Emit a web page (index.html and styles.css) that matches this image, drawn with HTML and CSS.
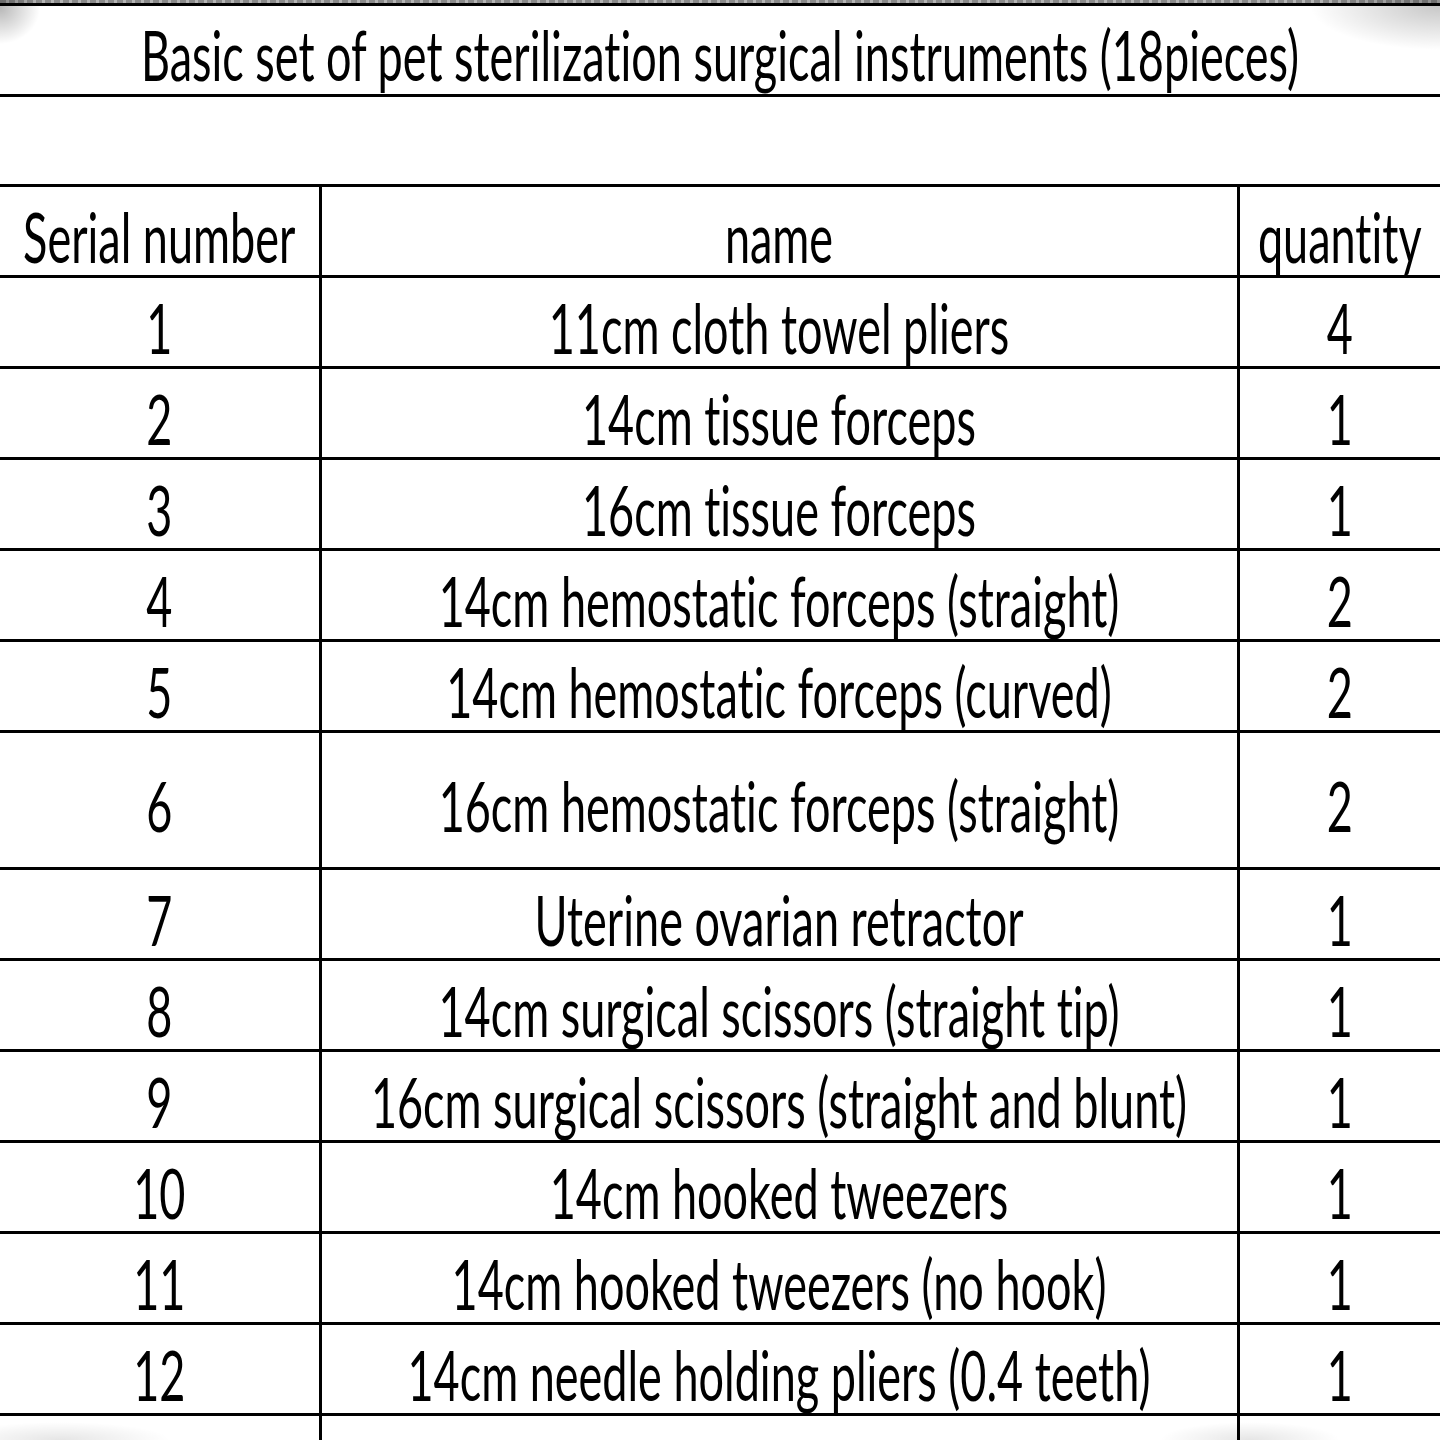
FILE: index.html
```html
<!DOCTYPE html>
<html lang="en">
<head>
<meta charset="utf-8">
<title>Basic set of pet sterilization surgical instruments</title>
<link rel="stylesheet" href="styles.css">
</head>
<body>
<div class="sheet">
  <div class="cap-band"></div>
  <table class="grid">
    <colgroup>
      <col class="c-serial">
      <col class="c-name">
      <col class="c-qty">
    </colgroup>
    <tbody>
      <tr class="r-title"><td colspan="3" class="title"><span class="t">Basic set of pet sterilization surgical instruments (18pieces)</span></td></tr>
      <tr class="r-blank"><td colspan="3" class="blank"></td></tr>
      <tr class="r"><td><span class="t">Serial number</span></td><td><span class="t">name</span></td><td><span class="t">quantity</span></td></tr>
      <tr class="r"><td><span class="t">1</span></td><td><span class="t">11cm cloth towel pliers</span></td><td><span class="t">4</span></td></tr>
      <tr class="r"><td><span class="t">2</span></td><td><span class="t">14cm tissue forceps</span></td><td><span class="t">1</span></td></tr>
      <tr class="r"><td><span class="t">3</span></td><td><span class="t">16cm tissue forceps</span></td><td><span class="t">1</span></td></tr>
      <tr class="r"><td><span class="t">4</span></td><td><span class="t">14cm hemostatic forceps (straight)</span></td><td><span class="t">2</span></td></tr>
      <tr class="r"><td><span class="t">5</span></td><td><span class="t">14cm hemostatic forceps (curved)</span></td><td><span class="t">2</span></td></tr>
      <tr class="r r-tall"><td><span class="t">6</span></td><td><span class="t">16cm hemostatic forceps (straight)</span></td><td><span class="t">2</span></td></tr>
      <tr class="r"><td><span class="t">7</span></td><td><span class="t">Uterine ovarian retractor</span></td><td><span class="t">1</span></td></tr>
      <tr class="r"><td><span class="t">8</span></td><td><span class="t">14cm surgical scissors (straight tip)</span></td><td><span class="t">1</span></td></tr>
      <tr class="r"><td><span class="t">9</span></td><td><span class="t">16cm surgical scissors (straight and blunt)</span></td><td><span class="t">1</span></td></tr>
      <tr class="r"><td><span class="t">10</span></td><td><span class="t">14cm hooked tweezers</span></td><td><span class="t">1</span></td></tr>
      <tr class="r"><td><span class="t">11</span></td><td><span class="t">14cm hooked tweezers (no hook)</span></td><td><span class="t">1</span></td></tr>
      <tr class="r"><td><span class="t">12</span></td><td><span class="t">14cm needle holding pliers (0.4 teeth)</span></td><td><span class="t">1</span></td></tr>
      <tr class="r r-tail"><td></td><td></td><td></td></tr>
    </tbody>
  </table>
</div>
</body>
</html>
```

FILE: styles.css
```css
html, body {
  margin: 0;
  padding: 0;
  background: #ffffff;
}

.sheet {
  position: relative;
  width: 1440px;
  height: 1440px;
  overflow: hidden;
  background: #ffffff;
  font-family: Lato, "Noto Sans", sans-serif;
  color: #000;
}

/* scan shadows lying over the sheet corners */
.sheet::after {
  content: "";
  position: absolute;
  inset: 0;
  pointer-events: none;
  background:
    radial-gradient(ellipse 40px 36px at 0px 8px, rgba(0,0,0,0.28), rgba(0,0,0,0) 100%),
    radial-gradient(ellipse 130px 44px at 1440px 6px, rgba(0,0,0,0.22), rgba(0,0,0,0) 100%),
    radial-gradient(ellipse 110px 18px at 60px 1440px, rgba(0,0,0,0.10), rgba(0,0,0,0) 100%),
    radial-gradient(ellipse 90px 18px at 1250px 1440px, rgba(0,0,0,0.10), rgba(0,0,0,0) 100%);
}

.cap-band {
  height: 3px;
  background: repeating-linear-gradient(90deg, #8a8a8a 0 6px, #b5b5b5 6px 9px);
}

.grid {
  width: 1440px;
  table-layout: fixed;
  border-collapse: collapse;
}

.c-serial { width: 320px; }
.c-name { width: 918px; }
.c-qty { width: 202px; }

.grid td {
  padding: 0;
  text-align: center;
  vertical-align: middle;
  border: 3px solid #000;
  white-space: nowrap;
  overflow: visible;
  line-height: 0;
}

.grid td:first-child { border-left: none; }
.grid td:last-child { border-right: none; }

.grid td.title,
.grid td.blank {
  border-left: none;
  border-right: none;
}

.r-title td { height: 88px; }
.r-blank td { height: 87px; }
.r td { height: 88px; }
.r-tall td { height: 134px; }
.r-tail td { height: 40px; border-bottom: none; }

.t {
  display: block;
  font-size: 45px;
  line-height: 54px;
  letter-spacing: 0;
  font-variant-ligatures: none;
  font-feature-settings: "liga" 0, "clig" 0;
  transform: translateY(6px) scaleY(1.55);
  transform-origin: 50% 50%;
}

.title .t {
  transform: translateY(5px) scaleY(1.55);
}
```
